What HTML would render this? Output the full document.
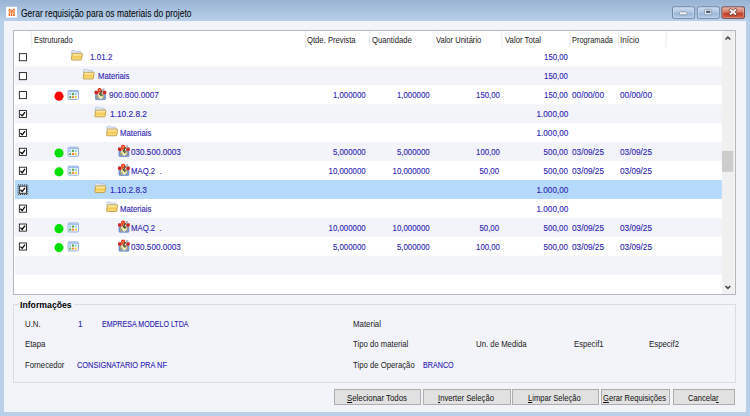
<!DOCTYPE html>
<html lang="pt-BR"><head><meta charset="utf-8"><title>Gerar requisição para os materiais do projeto</title>
<style>
*{box-sizing:border-box;margin:0;padding:0}
html,body{width:750px;height:416px;overflow:hidden;background:#bad0e9}
body{font-family:"Liberation Sans",sans-serif;font-size:8.8px;color:#000;position:relative}
.win{position:absolute;left:0;top:0;width:750px;height:416px;background:linear-gradient(#99b4d3 0px,#a3bddb 7px,#b8d0e9 21px,#bad0e9 40px,#bad0e9 100%)}
.client{position:absolute;left:4px;top:21px;width:742px;height:391px;background:#f3f4fa}
.list{position:absolute;left:13px;top:30px;width:723px;height:265px;background:#fff;border:1px solid #b6b7be}
.gfx{position:absolute;left:0;top:0}
.abs{position:absolute}
.title{position:absolute;font-size:10px;color:#000;white-space:nowrap;line-height:11px}
.t,.val{position:absolute;white-space:nowrap;color:#2f25b2;line-height:10px;-webkit-text-stroke:0.12px #2f25b2}
.h,.lbl{position:absolute;white-space:nowrap;color:#1a1a1a;line-height:10px}
.group{position:absolute;left:13px;top:304px;width:723px;height:79px;border:1px solid #dcdde3}
.gcap{position:absolute;left:18px;top:300px;width:56px;height:10px;background:#f3f4fa}
.gt{position:absolute;white-space:nowrap;color:#000;line-height:11px;font-weight:bold;font-size:9px}
.btn{position:absolute;top:389px;height:16px;border:1px solid #adadad;background:#e1e1e1}
.bt{position:absolute;white-space:nowrap;color:#111;line-height:10px}
</style></head><body>
<div class="win">
<div class="client"></div>
<div class="list"></div>
<svg class="gfx" width="750" height="416" viewBox="0 0 750 416">
<defs>
<linearGradient id="fg" x1="0" y1="0" x2="0" y2="1"><stop offset="0" stop-color="#fcefbd"/><stop offset="0.28" stop-color="#fae293"/><stop offset="0.5" stop-color="#f3c94f"/><stop offset="0.75" stop-color="#f6d672"/><stop offset="1" stop-color="#f9e39a"/></linearGradient>
<linearGradient id="cb" x1="0" y1="0" x2="0" y2="1"><stop offset="0" stop-color="#cadaee"/><stop offset="0.46" stop-color="#b2c8e4"/><stop offset="0.54" stop-color="#9bb6d9"/><stop offset="1" stop-color="#b3cbe8"/></linearGradient>
<linearGradient id="cr" x1="0" y1="0" x2="0" y2="1"><stop offset="0" stop-color="#ebb3a4"/><stop offset="0.46" stop-color="#d57a66"/><stop offset="0.54" stop-color="#c23f27"/><stop offset="1" stop-color="#d25c42"/></linearGradient>
</defs>
<g transform="translate(6.10 6.80)"><rect width="11" height="10.8" fill="#fff"/><g fill="#f4661f"><rect x="2.7" y="2" width="1.5" height="1.3"/><rect x="6.9" y="2" width="1.7" height="1.3"/><rect x="2.3" y="3.3" width="1.3" height="1.2"/><rect x="4.1" y="3" width="1.5" height="1.3"/><rect x="5.8" y="2.8" width="1.2" height="1.2"/><rect x="7.6" y="3.3" width="1.4" height="1.2"/><rect x="3.1" y="4.4" width="1.4" height="1.2"/><rect x="5" y="4.2" width="1.3" height="1.3"/><rect x="6.6" y="4.4" width="1.5" height="1.2"/><rect x="2.5" y="5.6" width="1.5" height="1.1"/><rect x="4.4" y="5.5" width="2.4" height="1"/><rect x="7.3" y="5.6" width="1.5" height="1.1"/><rect x="2.6" y="6.9" width="1.5" height="2.3"/><rect x="4.8" y="6.7" width="1.5" height="2.5"/><rect x="7" y="6.9" width="1.6" height="2.3"/></g></g>
<rect x="672.6" y="6.9" width="22" height="11.4" rx="1.2" fill="url(#cb)" stroke="#627a9b" stroke-width="0.9"/>
<rect x="673.5" y="7.8" width="20.2" height="9.6" rx="0.8" fill="none" stroke="#dbe7f5" stroke-width="0.7" opacity="0.8"/>
<rect x="697.4" y="6.9" width="21.8" height="11.4" rx="1.2" fill="url(#cb)" stroke="#627a9b" stroke-width="0.9"/>
<rect x="698.3" y="7.8" width="20" height="9.6" rx="0.8" fill="none" stroke="#dbe7f5" stroke-width="0.7" opacity="0.8"/>
<rect x="722" y="6.9" width="22.4" height="11.4" rx="1.2" fill="url(#cr)" stroke="#6a322c" stroke-width="0.9"/>
<rect x="722.9" y="7.8" width="20.6" height="9.6" rx="0.8" fill="none" stroke="#efc3b8" stroke-width="0.7" opacity="0.7"/>
<rect x="679.5" y="11.8" width="7.6" height="3" rx="0.9" fill="#f1f3f7" stroke="#75849a" stroke-width="0.7"/>
<rect x="704.6" y="9.3" width="7.1" height="5.4" rx="0.7" fill="#f4f6fa" stroke="#75849a" stroke-width="0.7"/>
<rect x="706.1" y="10.7" width="4.3" height="2.4" fill="#475d80"/>
<path d="M730.6 10.1 L735.4 14 M735.4 10.1 L730.6 14" stroke="#64302b" stroke-width="3.1" stroke-linecap="square"/>
<path d="M730.6 10.1 L735.4 14 M735.4 10.1 L730.6 14" stroke="#f7f3f1" stroke-width="1.9" stroke-linecap="square"/>
<rect x="30.8" y="31" width="1" height="16.2" fill="#e7e8ed"/><rect x="304.8" y="31" width="1" height="16.2" fill="#e7e8ed"/><rect x="369.0" y="31" width="1" height="16.2" fill="#e7e8ed"/><rect x="433.5" y="31" width="1" height="16.2" fill="#e7e8ed"/><rect x="501.5" y="31" width="1" height="16.2" fill="#e7e8ed"/><rect x="569.5" y="31" width="1" height="16.2" fill="#e7e8ed"/><rect x="618.0" y="31" width="1" height="16.2" fill="#e7e8ed"/><rect x="665.5" y="31" width="1" height="16.2" fill="#e7e8ed"/>
<g transform="translate(18.90 53.20)"><rect x="0.45" y="0.45" width="7.1" height="7.1" fill="#fff" stroke="#1e1e1e" stroke-width="0.9"/></g><g transform="translate(71.00 50.15)"><path d="M0.7 4 L0.7 1 Q0.7 0.4 1.3 0.4 L4.2 0.4 L5 1.3 L9.2 1.3 Q9.8 1.3 9.8 1.9 L9.8 4 Z" fill="#e3ebf7" stroke="#a9bcd8" stroke-width="0.7"/><path d="M1.7 3.2 L10.9 3.2 Q11.5 3.2 11.4 3.8 L10.5 9.3 Q10.4 9.9 9.8 9.9 L1 9.9 Q0.3 9.9 0.4 9.3 L1.1 3.8 Q1.2 3.2 1.7 3.2 Z" fill="url(#fg)" stroke="#bd9639" stroke-width="0.85"/></g>
<rect x="15" y="66.43" width="706.9" height="18.93" fill="#f3f3fa"/><g transform="translate(18.90 72.13)"><rect x="0.45" y="0.45" width="7.1" height="7.1" fill="#fff" stroke="#1e1e1e" stroke-width="0.9"/></g><g transform="translate(82.80 69.08)"><path d="M0.7 4 L0.7 1 Q0.7 0.4 1.3 0.4 L4.2 0.4 L5 1.3 L9.2 1.3 Q9.8 1.3 9.8 1.9 L9.8 4 Z" fill="#e3ebf7" stroke="#a9bcd8" stroke-width="0.7"/><path d="M1.7 3.2 L10.9 3.2 Q11.5 3.2 11.4 3.8 L10.5 9.3 Q10.4 9.9 9.8 9.9 L1 9.9 Q0.3 9.9 0.4 9.3 L1.1 3.8 Q1.2 3.2 1.7 3.2 Z" fill="url(#fg)" stroke="#bd9639" stroke-width="0.85"/></g>
<g transform="translate(18.90 91.06)"><rect x="0.45" y="0.45" width="7.1" height="7.1" fill="#fff" stroke="#1e1e1e" stroke-width="0.9"/></g><circle cx="59" cy="96.16" r="4.55" fill="#ff0000"/><g transform="translate(67.70 90.06)"><rect x="0.4" y="0.4" width="10.4" height="9" rx="0.9" fill="#fdfdff" stroke="#7a9ed8" stroke-width="0.8"/><rect x="0.8" y="0.8" width="9.6" height="1.5" fill="#9dbaea"/><rect x="1.5" y="2.9" width="2" height="2.2" fill="#8ec8f8"/><rect x="4.3" y="2.9" width="2.1" height="2.2" fill="#5baa50"/><rect x="7.3" y="2.9" width="2.1" height="2.2" fill="#9ad2fa"/><rect x="1.5" y="6" width="2" height="2.2" fill="#5dae54"/><rect x="4.3" y="6" width="2.1" height="2.2" fill="#f78b45"/><rect x="7.3" y="6" width="2.1" height="2.2" fill="#f2d05a"/></g><g transform="translate(94.40 87.81)"><rect x="1.1" y="6.5" width="9.9" height="5.4" rx="0.7" fill="#7c9ada" stroke="#5f82cc" stroke-width="0.7"/><path d="M3.4 3 L8.6 3 L9 8.4 L6.2 11.2 L3.4 8.4 Z" fill="#f6f0b4"/><rect x="0.3" y="2.6" width="2.7" height="1" fill="#a9a2a2"/><rect x="9" y="2.6" width="2.7" height="1" fill="#a9a2a2"/><rect x="0.1" y="3.2" width="3.6" height="3.3" rx="1" fill="#cf2222"/><rect x="8.3" y="3.2" width="3.6" height="3.3" rx="1" fill="#cf2222"/><path d="M9.3 1.5 L7.6 3.6" stroke="#b0b0b3" stroke-width="1.8" stroke-linecap="round"/><circle cx="5.2" cy="2.3" r="1.5" fill="#f9b050" stroke="#e8261e" stroke-width="1.2"/><path d="M4.6 3.3 L4.3 5.6" stroke="#ef4a22" stroke-width="1.3"/><path d="M7.7 3 L5 6.8" stroke="#3a3828" stroke-width="1.1"/><path d="M6.9 5.5 L8.6 7.2 L7.1 8.8 L5.4 7.1 Z" fill="#34331f"/><rect x="6.7" y="6.5" width="0.8" height="0.8" fill="#e9e2a0"/><rect x="7.3" y="7.6" width="0.7" height="0.7" fill="#e9e2a0"/><rect x="2.2" y="7.1" width="0.8" height="4.3" fill="#b5a040"/><rect x="3.9" y="7.6" width="0.7" height="3.8" fill="#c9b95a"/><rect x="9" y="7.4" width="0.7" height="4" fill="#b5a040"/><path d="M5.3 9.9 L6.5 11.3 L8.7 8.9" fill="none" stroke="#f3ecb0" stroke-width="0.9"/></g>
<rect x="15" y="104.29" width="706.9" height="18.93" fill="#f3f3fa"/><g transform="translate(18.90 109.99)"><rect x="0.45" y="0.45" width="7.1" height="7.1" fill="#fff" stroke="#1e1e1e" stroke-width="0.9"/><path d="M1.5 4.1 L3.3 5.9 L6.1 2.1" fill="none" stroke="#000" stroke-width="1.25"/></g><g transform="translate(94.50 106.94)"><path d="M0.7 4 L0.7 1 Q0.7 0.4 1.3 0.4 L4.2 0.4 L5 1.3 L9.2 1.3 Q9.8 1.3 9.8 1.9 L9.8 4 Z" fill="#e3ebf7" stroke="#a9bcd8" stroke-width="0.7"/><path d="M1.7 3.2 L10.9 3.2 Q11.5 3.2 11.4 3.8 L10.5 9.3 Q10.4 9.9 9.8 9.9 L1 9.9 Q0.3 9.9 0.4 9.3 L1.1 3.8 Q1.2 3.2 1.7 3.2 Z" fill="url(#fg)" stroke="#bd9639" stroke-width="0.85"/></g>
<g transform="translate(18.90 128.92)"><rect x="0.45" y="0.45" width="7.1" height="7.1" fill="#fff" stroke="#1e1e1e" stroke-width="0.9"/><path d="M1.5 4.1 L3.3 5.9 L6.1 2.1" fill="none" stroke="#000" stroke-width="1.25"/></g><g transform="translate(106.20 125.87)"><path d="M0.7 4 L0.7 1 Q0.7 0.4 1.3 0.4 L4.2 0.4 L5 1.3 L9.2 1.3 Q9.8 1.3 9.8 1.9 L9.8 4 Z" fill="#e3ebf7" stroke="#a9bcd8" stroke-width="0.7"/><path d="M1.7 3.2 L10.9 3.2 Q11.5 3.2 11.4 3.8 L10.5 9.3 Q10.4 9.9 9.8 9.9 L1 9.9 Q0.3 9.9 0.4 9.3 L1.1 3.8 Q1.2 3.2 1.7 3.2 Z" fill="url(#fg)" stroke="#bd9639" stroke-width="0.85"/></g>
<rect x="15" y="142.15" width="706.9" height="18.93" fill="#f3f3fa"/><g transform="translate(18.90 147.85)"><rect x="0.45" y="0.45" width="7.1" height="7.1" fill="#fff" stroke="#1e1e1e" stroke-width="0.9"/><path d="M1.5 4.1 L3.3 5.9 L6.1 2.1" fill="none" stroke="#000" stroke-width="1.25"/></g><circle cx="59" cy="152.95" r="4.55" fill="#00e000"/><g transform="translate(67.70 146.85)"><rect x="0.4" y="0.4" width="10.4" height="9" rx="0.9" fill="#fdfdff" stroke="#7a9ed8" stroke-width="0.8"/><rect x="0.8" y="0.8" width="9.6" height="1.5" fill="#9dbaea"/><rect x="1.5" y="2.9" width="2" height="2.2" fill="#8ec8f8"/><rect x="4.3" y="2.9" width="2.1" height="2.2" fill="#5baa50"/><rect x="7.3" y="2.9" width="2.1" height="2.2" fill="#9ad2fa"/><rect x="1.5" y="6" width="2" height="2.2" fill="#5dae54"/><rect x="4.3" y="6" width="2.1" height="2.2" fill="#f78b45"/><rect x="7.3" y="6" width="2.1" height="2.2" fill="#f2d05a"/></g><g transform="translate(117.90 144.60)"><rect x="1.1" y="6.5" width="9.9" height="5.4" rx="0.7" fill="#7c9ada" stroke="#5f82cc" stroke-width="0.7"/><path d="M3.4 3 L8.6 3 L9 8.4 L6.2 11.2 L3.4 8.4 Z" fill="#f6f0b4"/><rect x="0.3" y="2.6" width="2.7" height="1" fill="#a9a2a2"/><rect x="9" y="2.6" width="2.7" height="1" fill="#a9a2a2"/><rect x="0.1" y="3.2" width="3.6" height="3.3" rx="1" fill="#cf2222"/><rect x="8.3" y="3.2" width="3.6" height="3.3" rx="1" fill="#cf2222"/><path d="M9.3 1.5 L7.6 3.6" stroke="#b0b0b3" stroke-width="1.8" stroke-linecap="round"/><circle cx="5.2" cy="2.3" r="1.5" fill="#f9b050" stroke="#e8261e" stroke-width="1.2"/><path d="M4.6 3.3 L4.3 5.6" stroke="#ef4a22" stroke-width="1.3"/><path d="M7.7 3 L5 6.8" stroke="#3a3828" stroke-width="1.1"/><path d="M6.9 5.5 L8.6 7.2 L7.1 8.8 L5.4 7.1 Z" fill="#34331f"/><rect x="6.7" y="6.5" width="0.8" height="0.8" fill="#e9e2a0"/><rect x="7.3" y="7.6" width="0.7" height="0.7" fill="#e9e2a0"/><rect x="2.2" y="7.1" width="0.8" height="4.3" fill="#b5a040"/><rect x="3.9" y="7.6" width="0.7" height="3.8" fill="#c9b95a"/><rect x="9" y="7.4" width="0.7" height="4" fill="#b5a040"/><path d="M5.3 9.9 L6.5 11.3 L8.7 8.9" fill="none" stroke="#f3ecb0" stroke-width="0.9"/></g>
<g transform="translate(18.90 166.78)"><rect x="0.45" y="0.45" width="7.1" height="7.1" fill="#fff" stroke="#1e1e1e" stroke-width="0.9"/><path d="M1.5 4.1 L3.3 5.9 L6.1 2.1" fill="none" stroke="#000" stroke-width="1.25"/></g><circle cx="59" cy="171.88" r="4.55" fill="#00e000"/><g transform="translate(67.70 165.78)"><rect x="0.4" y="0.4" width="10.4" height="9" rx="0.9" fill="#fdfdff" stroke="#7a9ed8" stroke-width="0.8"/><rect x="0.8" y="0.8" width="9.6" height="1.5" fill="#9dbaea"/><rect x="1.5" y="2.9" width="2" height="2.2" fill="#8ec8f8"/><rect x="4.3" y="2.9" width="2.1" height="2.2" fill="#5baa50"/><rect x="7.3" y="2.9" width="2.1" height="2.2" fill="#9ad2fa"/><rect x="1.5" y="6" width="2" height="2.2" fill="#5dae54"/><rect x="4.3" y="6" width="2.1" height="2.2" fill="#f78b45"/><rect x="7.3" y="6" width="2.1" height="2.2" fill="#f2d05a"/></g><g transform="translate(117.90 163.53)"><rect x="1.1" y="6.5" width="9.9" height="5.4" rx="0.7" fill="#7c9ada" stroke="#5f82cc" stroke-width="0.7"/><path d="M3.4 3 L8.6 3 L9 8.4 L6.2 11.2 L3.4 8.4 Z" fill="#f6f0b4"/><rect x="0.3" y="2.6" width="2.7" height="1" fill="#a9a2a2"/><rect x="9" y="2.6" width="2.7" height="1" fill="#a9a2a2"/><rect x="0.1" y="3.2" width="3.6" height="3.3" rx="1" fill="#cf2222"/><rect x="8.3" y="3.2" width="3.6" height="3.3" rx="1" fill="#cf2222"/><path d="M9.3 1.5 L7.6 3.6" stroke="#b0b0b3" stroke-width="1.8" stroke-linecap="round"/><circle cx="5.2" cy="2.3" r="1.5" fill="#f9b050" stroke="#e8261e" stroke-width="1.2"/><path d="M4.6 3.3 L4.3 5.6" stroke="#ef4a22" stroke-width="1.3"/><path d="M7.7 3 L5 6.8" stroke="#3a3828" stroke-width="1.1"/><path d="M6.9 5.5 L8.6 7.2 L7.1 8.8 L5.4 7.1 Z" fill="#34331f"/><rect x="6.7" y="6.5" width="0.8" height="0.8" fill="#e9e2a0"/><rect x="7.3" y="7.6" width="0.7" height="0.7" fill="#e9e2a0"/><rect x="2.2" y="7.1" width="0.8" height="4.3" fill="#b5a040"/><rect x="3.9" y="7.6" width="0.7" height="3.8" fill="#c9b95a"/><rect x="9" y="7.4" width="0.7" height="4" fill="#b5a040"/><path d="M5.3 9.9 L6.5 11.3 L8.7 8.9" fill="none" stroke="#f3ecb0" stroke-width="0.9"/></g>
<rect x="15" y="180.01" width="706.9" height="18.93" fill="#b5d9fb"/><g transform="translate(18.90 185.71)"><rect x="-0.8" y="-0.8" width="9.6" height="9.6" fill="none" stroke="#222" stroke-width="0.9" stroke-dasharray="1 1"/><rect x="0.45" y="0.45" width="7.1" height="7.1" fill="#fff" stroke="#1e1e1e" stroke-width="0.9"/><path d="M1.5 4.1 L3.3 5.9 L6.1 2.1" fill="none" stroke="#000" stroke-width="1.25"/></g><g transform="translate(94.50 182.66)"><path d="M0.7 4 L0.7 1 Q0.7 0.4 1.3 0.4 L4.2 0.4 L5 1.3 L9.2 1.3 Q9.8 1.3 9.8 1.9 L9.8 4 Z" fill="#e3ebf7" stroke="#a9bcd8" stroke-width="0.7"/><path d="M1.7 3.2 L10.9 3.2 Q11.5 3.2 11.4 3.8 L10.5 9.3 Q10.4 9.9 9.8 9.9 L1 9.9 Q0.3 9.9 0.4 9.3 L1.1 3.8 Q1.2 3.2 1.7 3.2 Z" fill="url(#fg)" stroke="#bd9639" stroke-width="0.85"/></g>
<g transform="translate(18.90 204.64)"><rect x="0.45" y="0.45" width="7.1" height="7.1" fill="#fff" stroke="#1e1e1e" stroke-width="0.9"/><path d="M1.5 4.1 L3.3 5.9 L6.1 2.1" fill="none" stroke="#000" stroke-width="1.25"/></g><g transform="translate(106.20 201.59)"><path d="M0.7 4 L0.7 1 Q0.7 0.4 1.3 0.4 L4.2 0.4 L5 1.3 L9.2 1.3 Q9.8 1.3 9.8 1.9 L9.8 4 Z" fill="#e3ebf7" stroke="#a9bcd8" stroke-width="0.7"/><path d="M1.7 3.2 L10.9 3.2 Q11.5 3.2 11.4 3.8 L10.5 9.3 Q10.4 9.9 9.8 9.9 L1 9.9 Q0.3 9.9 0.4 9.3 L1.1 3.8 Q1.2 3.2 1.7 3.2 Z" fill="url(#fg)" stroke="#bd9639" stroke-width="0.85"/></g>
<rect x="15" y="217.87" width="706.9" height="18.93" fill="#f3f3fa"/><g transform="translate(18.90 223.57)"><rect x="0.45" y="0.45" width="7.1" height="7.1" fill="#fff" stroke="#1e1e1e" stroke-width="0.9"/><path d="M1.5 4.1 L3.3 5.9 L6.1 2.1" fill="none" stroke="#000" stroke-width="1.25"/></g><circle cx="59" cy="228.67" r="4.55" fill="#00e000"/><g transform="translate(67.70 222.57)"><rect x="0.4" y="0.4" width="10.4" height="9" rx="0.9" fill="#fdfdff" stroke="#7a9ed8" stroke-width="0.8"/><rect x="0.8" y="0.8" width="9.6" height="1.5" fill="#9dbaea"/><rect x="1.5" y="2.9" width="2" height="2.2" fill="#8ec8f8"/><rect x="4.3" y="2.9" width="2.1" height="2.2" fill="#5baa50"/><rect x="7.3" y="2.9" width="2.1" height="2.2" fill="#9ad2fa"/><rect x="1.5" y="6" width="2" height="2.2" fill="#5dae54"/><rect x="4.3" y="6" width="2.1" height="2.2" fill="#f78b45"/><rect x="7.3" y="6" width="2.1" height="2.2" fill="#f2d05a"/></g><g transform="translate(117.90 220.32)"><rect x="1.1" y="6.5" width="9.9" height="5.4" rx="0.7" fill="#7c9ada" stroke="#5f82cc" stroke-width="0.7"/><path d="M3.4 3 L8.6 3 L9 8.4 L6.2 11.2 L3.4 8.4 Z" fill="#f6f0b4"/><rect x="0.3" y="2.6" width="2.7" height="1" fill="#a9a2a2"/><rect x="9" y="2.6" width="2.7" height="1" fill="#a9a2a2"/><rect x="0.1" y="3.2" width="3.6" height="3.3" rx="1" fill="#cf2222"/><rect x="8.3" y="3.2" width="3.6" height="3.3" rx="1" fill="#cf2222"/><path d="M9.3 1.5 L7.6 3.6" stroke="#b0b0b3" stroke-width="1.8" stroke-linecap="round"/><circle cx="5.2" cy="2.3" r="1.5" fill="#f9b050" stroke="#e8261e" stroke-width="1.2"/><path d="M4.6 3.3 L4.3 5.6" stroke="#ef4a22" stroke-width="1.3"/><path d="M7.7 3 L5 6.8" stroke="#3a3828" stroke-width="1.1"/><path d="M6.9 5.5 L8.6 7.2 L7.1 8.8 L5.4 7.1 Z" fill="#34331f"/><rect x="6.7" y="6.5" width="0.8" height="0.8" fill="#e9e2a0"/><rect x="7.3" y="7.6" width="0.7" height="0.7" fill="#e9e2a0"/><rect x="2.2" y="7.1" width="0.8" height="4.3" fill="#b5a040"/><rect x="3.9" y="7.6" width="0.7" height="3.8" fill="#c9b95a"/><rect x="9" y="7.4" width="0.7" height="4" fill="#b5a040"/><path d="M5.3 9.9 L6.5 11.3 L8.7 8.9" fill="none" stroke="#f3ecb0" stroke-width="0.9"/></g>
<g transform="translate(18.90 242.50)"><rect x="0.45" y="0.45" width="7.1" height="7.1" fill="#fff" stroke="#1e1e1e" stroke-width="0.9"/><path d="M1.5 4.1 L3.3 5.9 L6.1 2.1" fill="none" stroke="#000" stroke-width="1.25"/></g><circle cx="59" cy="247.60" r="4.55" fill="#00e000"/><g transform="translate(67.70 241.50)"><rect x="0.4" y="0.4" width="10.4" height="9" rx="0.9" fill="#fdfdff" stroke="#7a9ed8" stroke-width="0.8"/><rect x="0.8" y="0.8" width="9.6" height="1.5" fill="#9dbaea"/><rect x="1.5" y="2.9" width="2" height="2.2" fill="#8ec8f8"/><rect x="4.3" y="2.9" width="2.1" height="2.2" fill="#5baa50"/><rect x="7.3" y="2.9" width="2.1" height="2.2" fill="#9ad2fa"/><rect x="1.5" y="6" width="2" height="2.2" fill="#5dae54"/><rect x="4.3" y="6" width="2.1" height="2.2" fill="#f78b45"/><rect x="7.3" y="6" width="2.1" height="2.2" fill="#f2d05a"/></g><g transform="translate(117.90 239.25)"><rect x="1.1" y="6.5" width="9.9" height="5.4" rx="0.7" fill="#7c9ada" stroke="#5f82cc" stroke-width="0.7"/><path d="M3.4 3 L8.6 3 L9 8.4 L6.2 11.2 L3.4 8.4 Z" fill="#f6f0b4"/><rect x="0.3" y="2.6" width="2.7" height="1" fill="#a9a2a2"/><rect x="9" y="2.6" width="2.7" height="1" fill="#a9a2a2"/><rect x="0.1" y="3.2" width="3.6" height="3.3" rx="1" fill="#cf2222"/><rect x="8.3" y="3.2" width="3.6" height="3.3" rx="1" fill="#cf2222"/><path d="M9.3 1.5 L7.6 3.6" stroke="#b0b0b3" stroke-width="1.8" stroke-linecap="round"/><circle cx="5.2" cy="2.3" r="1.5" fill="#f9b050" stroke="#e8261e" stroke-width="1.2"/><path d="M4.6 3.3 L4.3 5.6" stroke="#ef4a22" stroke-width="1.3"/><path d="M7.7 3 L5 6.8" stroke="#3a3828" stroke-width="1.1"/><path d="M6.9 5.5 L8.6 7.2 L7.1 8.8 L5.4 7.1 Z" fill="#34331f"/><rect x="6.7" y="6.5" width="0.8" height="0.8" fill="#e9e2a0"/><rect x="7.3" y="7.6" width="0.7" height="0.7" fill="#e9e2a0"/><rect x="2.2" y="7.1" width="0.8" height="4.3" fill="#b5a040"/><rect x="3.9" y="7.6" width="0.7" height="3.8" fill="#c9b95a"/><rect x="9" y="7.4" width="0.7" height="4" fill="#b5a040"/><path d="M5.3 9.9 L6.5 11.3 L8.7 8.9" fill="none" stroke="#f3ecb0" stroke-width="0.9"/></g>
<rect x="15" y="255.73" width="706.9" height="18.93" fill="#f3f3fa"/><rect x="721.9" y="31" width="12.8" height="263" fill="#f0f0f0"/>
<path d="M725.5 39.5 L727.9 37.1 L730.3 39.5" fill="none" stroke="#454545" stroke-width="1.5"/>
<path d="M725.5 286 L727.9 288.4 L730.3 286" fill="none" stroke="#454545" stroke-width="1.5"/>
<rect x="721.9" y="150.9" width="11.3" height="20.9" fill="#cdcdcd"/>
</svg>
<div class="titlebar"><div class="title" style="left:20.60px;transform-origin:0 0;top:8px;transform:scaleX(0.850)">Gerar requisição para os materiais do projeto</div></div>
<div class="grid" role="grid"><div class="thead" role="row"><div class="h" style="left:33.70px;transform-origin:0 0;top:35px;transform:scaleX(0.851)">Estruturado</div><div class="h" style="left:307.30px;transform-origin:0 0;top:35px;transform:scaleX(0.872)">Qtde. Prevista</div><div class="h" style="left:371.60px;transform-origin:0 0;top:35px;transform:scaleX(0.873)">Quantidade</div><div class="h" style="left:435.90px;transform-origin:0 0;top:35px;transform:scaleX(0.860)">Valor Unitário</div><div class="h" style="left:504.70px;transform-origin:0 0;top:35px;transform:scaleX(0.883)">Valor Total</div><div class="h" style="left:572.00px;transform-origin:0 0;top:35px;transform:scaleX(0.847)">Programada</div><div class="h" style="left:620.00px;transform-origin:0 0;top:35px;transform:scaleX(0.918)">Início</div></div>
<div class="tr" role="row"><div class="t" style="left:90.40px;transform-origin:0 0;top:52px;transform:scaleX(0.916)">1.01.2</div><div class="t" style="right:181.80px;transform-origin:100% 0;top:52px;transform:scaleX(0.884)">150,00</div></div>
<div class="tr" role="row"><div class="t" style="left:97.60px;transform-origin:0 0;top:71px;transform:scaleX(0.880)">Materiais</div><div class="t" style="right:181.80px;transform-origin:100% 0;top:71px;transform:scaleX(0.884)">150,00</div></div>
<div class="tr" role="row"><div class="t" style="left:109.30px;transform-origin:0 0;top:90px;transform:scaleX(0.927)">900.800.0007</div><div class="t" style="right:384.40px;transform-origin:100% 0;top:90px;transform:scaleX(0.894)">1,000000</div><div class="t" style="right:320.70px;transform-origin:100% 0;top:90px;transform:scaleX(0.894)">1,000000</div><div class="t" style="right:250.50px;transform-origin:100% 0;top:90px;transform:scaleX(0.884)">150,00</div><div class="t" style="right:181.80px;transform-origin:100% 0;top:90px;transform:scaleX(0.884)">150,00</div><div class="t" style="left:572.00px;transform-origin:0 0;top:90px;transform:scaleX(0.934)">00/00/00</div><div class="t" style="left:620.00px;transform-origin:0 0;top:90px;transform:scaleX(0.934)">00/00/00</div></div>
<div class="tr" role="row"><div class="t" style="left:110.00px;transform-origin:0 0;top:109px;transform:scaleX(0.945)">1.10.2.8.2</div><div class="t" style="right:181.80px;transform-origin:100% 0;top:109px;transform:scaleX(0.926)">1.000,00</div></div>
<div class="tr" role="row"><div class="t" style="left:119.70px;transform-origin:0 0;top:128px;transform:scaleX(0.880)">Materiais</div><div class="t" style="right:181.80px;transform-origin:100% 0;top:128px;transform:scaleX(0.926)">1.000,00</div></div>
<div class="tr" role="row"><div class="t" style="left:130.70px;transform-origin:0 0;top:147px;transform:scaleX(0.927)">030.500.0003</div><div class="t" style="right:384.40px;transform-origin:100% 0;top:147px;transform:scaleX(0.894)">5,000000</div><div class="t" style="right:320.70px;transform-origin:100% 0;top:147px;transform:scaleX(0.894)">5,000000</div><div class="t" style="right:250.50px;transform-origin:100% 0;top:147px;transform:scaleX(0.884)">100,00</div><div class="t" style="right:181.80px;transform-origin:100% 0;top:147px;transform:scaleX(0.903)">500,00</div><div class="t" style="left:572.00px;transform-origin:0 0;top:147px;transform:scaleX(0.934)">03/09/25</div><div class="t" style="left:620.00px;transform-origin:0 0;top:147px;transform:scaleX(0.934)">03/09/25</div></div>
<div class="tr" role="row"><div class="t" style="left:130.70px;transform-origin:0 0;top:166px;transform:scaleX(0.884)">MAQ.2&nbsp;&nbsp;.</div><div class="t" style="right:384.40px;transform-origin:100% 0;top:166px;transform:scaleX(0.890)">10,000000</div><div class="t" style="right:320.70px;transform-origin:100% 0;top:166px;transform:scaleX(0.890)">10,000000</div><div class="t" style="right:250.50px;transform-origin:100% 0;top:166px;transform:scaleX(0.890)">50,00</div><div class="t" style="right:181.80px;transform-origin:100% 0;top:166px;transform:scaleX(0.903)">500,00</div><div class="t" style="left:572.00px;transform-origin:0 0;top:166px;transform:scaleX(0.934)">03/09/25</div><div class="t" style="left:620.00px;transform-origin:0 0;top:166px;transform:scaleX(0.934)">03/09/25</div></div>
<div class="tr" role="row" aria-selected="true"><div class="t" style="left:110.00px;transform-origin:0 0;top:185px;transform:scaleX(0.945)">1.10.2.8.3</div><div class="t" style="right:181.80px;transform-origin:100% 0;top:185px;transform:scaleX(0.926)">1.000,00</div></div>
<div class="tr" role="row"><div class="t" style="left:119.70px;transform-origin:0 0;top:204px;transform:scaleX(0.880)">Materiais</div><div class="t" style="right:181.80px;transform-origin:100% 0;top:204px;transform:scaleX(0.926)">1.000,00</div></div>
<div class="tr" role="row"><div class="t" style="left:130.70px;transform-origin:0 0;top:223px;transform:scaleX(0.884)">MAQ.2&nbsp;&nbsp;.</div><div class="t" style="right:384.40px;transform-origin:100% 0;top:223px;transform:scaleX(0.890)">10,000000</div><div class="t" style="right:320.70px;transform-origin:100% 0;top:223px;transform:scaleX(0.890)">10,000000</div><div class="t" style="right:250.50px;transform-origin:100% 0;top:223px;transform:scaleX(0.890)">50,00</div><div class="t" style="right:181.80px;transform-origin:100% 0;top:223px;transform:scaleX(0.903)">500,00</div><div class="t" style="left:572.00px;transform-origin:0 0;top:223px;transform:scaleX(0.934)">03/09/25</div><div class="t" style="left:620.00px;transform-origin:0 0;top:223px;transform:scaleX(0.934)">03/09/25</div></div>
<div class="tr" role="row"><div class="t" style="left:130.70px;transform-origin:0 0;top:242px;transform:scaleX(0.927)">030.500.0003</div><div class="t" style="right:384.40px;transform-origin:100% 0;top:242px;transform:scaleX(0.894)">5,000000</div><div class="t" style="right:320.70px;transform-origin:100% 0;top:242px;transform:scaleX(0.894)">5,000000</div><div class="t" style="right:250.50px;transform-origin:100% 0;top:242px;transform:scaleX(0.884)">100,00</div><div class="t" style="right:181.80px;transform-origin:100% 0;top:242px;transform:scaleX(0.903)">500,00</div><div class="t" style="left:572.00px;transform-origin:0 0;top:242px;transform:scaleX(0.934)">03/09/25</div><div class="t" style="left:620.00px;transform-origin:0 0;top:242px;transform:scaleX(0.934)">03/09/25</div></div>
</div>
<div class="info"><div class="group"></div><div class="gcap"></div>
<div class="gt" style="left:20.00px;transform-origin:0 0;top:300px;transform:scaleX(0.966)">Informações</div>
<div class="lbl" style="left:24.80px;transform-origin:0 0;top:319px;transform:scaleX(0.892)">U.N.</div><div class="val" style="left:77.70px;transform-origin:0 0;top:319px;transform:scaleX(0.925)">1</div><div class="val" style="left:101.70px;transform-origin:0 0;top:319px;transform:scaleX(0.806)">EMPRESA MODELO LTDA</div><div class="lbl" style="left:24.80px;transform-origin:0 0;top:339px;transform:scaleX(0.887)">Etapa</div><div class="lbl" style="left:24.80px;transform-origin:0 0;top:360px;transform:scaleX(0.876)">Fornecedor</div><div class="val" style="left:77.00px;transform-origin:0 0;top:360px;transform:scaleX(0.843)">CONSIGNATARIO PRA NF</div><div class="lbl" style="left:353.00px;transform-origin:0 0;top:319px;transform:scaleX(0.895)">Material</div><div class="lbl" style="left:353.00px;transform-origin:0 0;top:339px;transform:scaleX(0.881)">Tipo do material</div><div class="lbl" style="left:476.00px;transform-origin:0 0;top:339px;transform:scaleX(0.886)">Un. de Medida</div><div class="lbl" style="left:573.70px;transform-origin:0 0;top:339px;transform:scaleX(0.877)">Especif1</div><div class="lbl" style="left:649.30px;transform-origin:0 0;top:339px;transform:scaleX(0.889)">Especif2</div><div class="lbl" style="left:353.00px;transform-origin:0 0;top:360px;transform:scaleX(0.880)">Tipo de Operação</div><div class="val" style="left:423.00px;transform-origin:0 0;top:360px;transform:scaleX(0.815)">BRANCO</div></div>
<div class="buttons"><div class="btn" role="button" style="left:334px;width:87px"></div><div class="bt" style="left:347.00px;transform-origin:0 0;top:393px;transform:scaleX(0.891)"><u>S</u>elecionar Todos</div><div class="btn" role="button" style="left:423px;width:88px"></div><div class="bt" style="left:438.30px;transform-origin:0 0;top:393px;transform:scaleX(0.874)"><u>I</u>nverter Seleção</div><div class="btn" role="button" style="left:512px;width:87px"></div><div class="bt" style="left:528.30px;transform-origin:0 0;top:393px;transform:scaleX(0.862)"><u>L</u>impar Seleção</div><div class="btn" role="button" style="left:601px;width:69px"></div><div class="bt" style="left:603.20px;transform-origin:0 0;top:393px;transform:scaleX(0.865)"><u>G</u>erar Requisições</div><div class="btn" role="button" style="left:673px;width:62px"></div><div class="bt" style="left:687.70px;transform-origin:0 0;top:393px;transform:scaleX(0.869)">Cancela<u>r</u></div></div>
</div>
</body></html>
